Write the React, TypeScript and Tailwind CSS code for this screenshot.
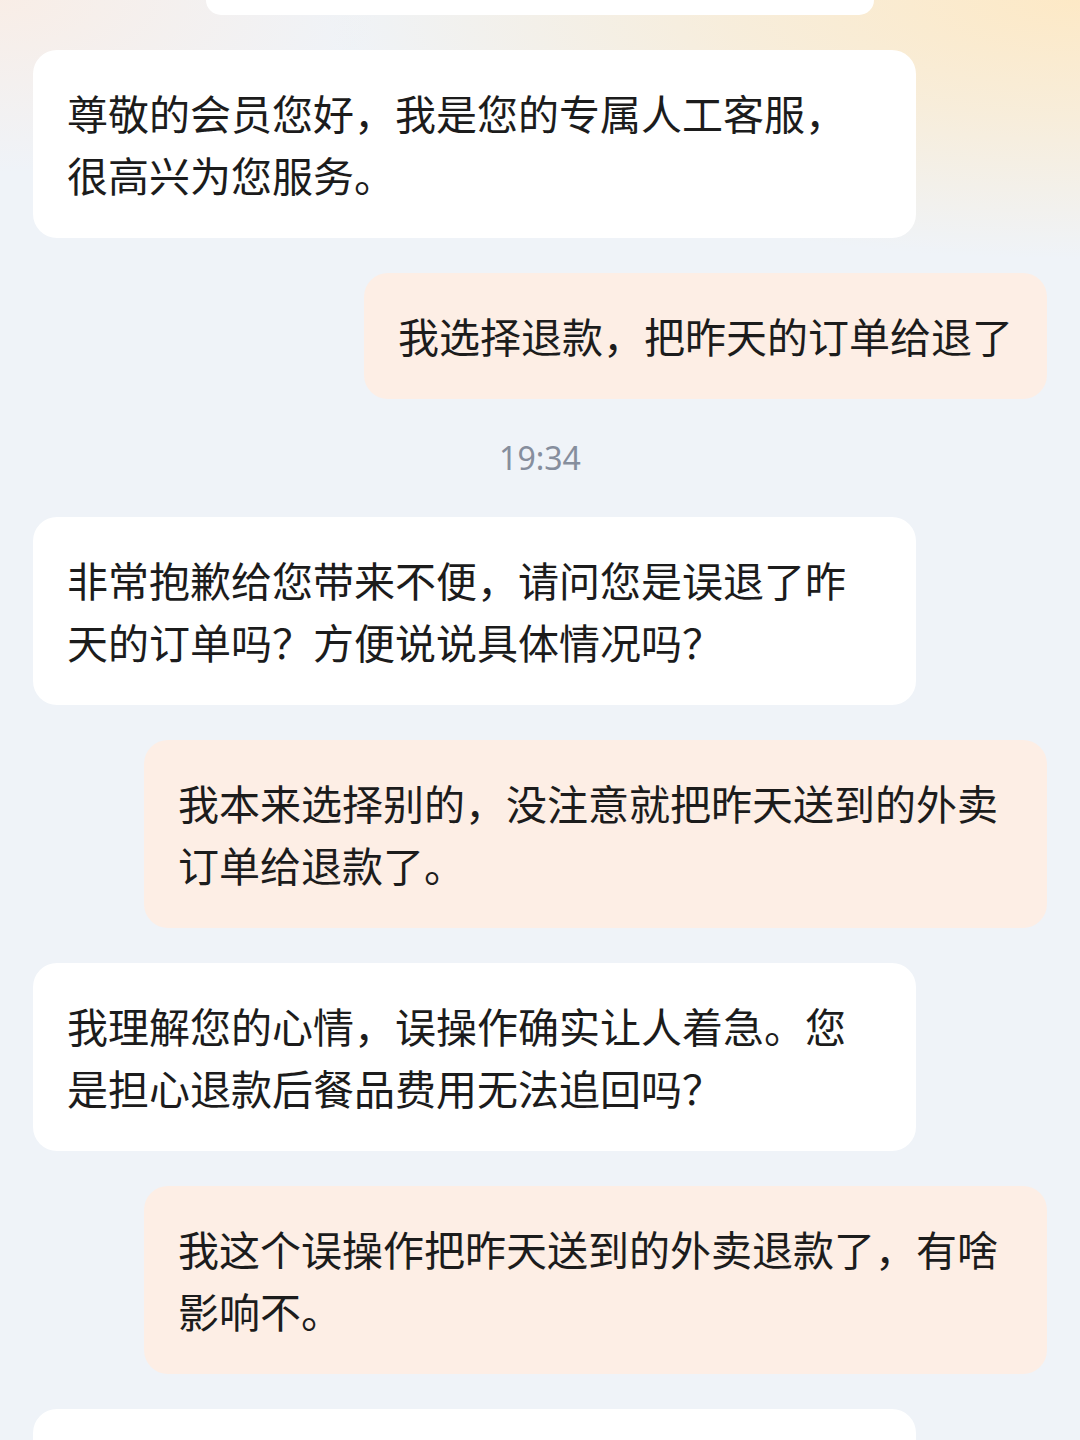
import React from 'react';

type Msg =
  | { kind: 'bot'; text: string }
  | { kind: 'me'; text: string }
  | { kind: 'time'; text: string };

const messages: Msg[] = [
  { kind: 'bot', text: '尊敬的会员您好，我是您的专属人工客服，很高兴为您服务。' },
  { kind: 'me', text: '我选择退款，把昨天的订单给退了' },
  { kind: 'time', text: '19:34' },
  { kind: 'bot', text: '非常抱歉给您带来不便，请问您是误退了昨天的订单吗？方便说说具体情况吗？' },
  { kind: 'me', text: '我本来选择别的，没注意就把昨天送到的外卖订单给退款了。' },
  { kind: 'bot', text: '我理解您的心情，误操作确实让人着急。您是担心退款后餐品费用无法追回吗？' },
  { kind: 'me', text: '我这个误操作把昨天送到的外卖退款了，有啥影响不。' },
];

const Bubble: React.FC<{ msg: Msg }> = ({ msg }) => {
  if (msg.kind === 'time') {
    return (
      <div className="flex h-[48px] items-center justify-center font-['Noto_Sans',sans-serif] text-[32px] text-[#868e9d]">
        {msg.text}
      </div>
    );
  }
  if (msg.kind === 'me') {
    return (
      <div className="flex justify-end">
        <div className="max-w-[903px] rounded-[24px] bg-[#fdeee5] px-[34px] pt-[31px] pb-[33px] text-[41px] leading-[62px] text-[#1c1c1c]">
          {msg.text}
        </div>
      </div>
    );
  }
  return (
    <div className="flex justify-start">
      <div className="max-w-[883px] rounded-[24px] bg-white px-[34px] pt-[31px] pb-[33px] text-[41px] leading-[62px] text-[#1c1c1c]">
        {msg.text}
      </div>
    </div>
  );
};

const App: React.FC = () => {
  return (
    <div className="h-[1440px] overflow-hidden bg-[#eff3f8] bg-[radial-gradient(ellipse_70%_18%_at_100%_0%,#fde9c6_0%,rgba(253,233,198,0.6)_45%,rgba(253,233,198,0)_100%),radial-gradient(ellipse_35%_12%_at_0%_0%,rgba(251,236,226,0.8)_0%,rgba(251,236,226,0)_100%)] font-['Noto_Sans_CJK_SC','Noto_Sans',sans-serif]">
      <div className="flex flex-col gap-[35px] px-[33px]">
        {/* tail of the previous card, scrolled off the top */}
        <div className="mx-auto h-[15px] w-[668px] rounded-b-[24px] bg-white" />
        {messages.map((m, i) => (
          <Bubble key={i} msg={m} />
        ))}
        <div className="flex justify-start">
          <div className="h-[120px] w-[883px] rounded-[24px] bg-white" />
        </div>
      </div>
    </div>
  );
};

export default App;
